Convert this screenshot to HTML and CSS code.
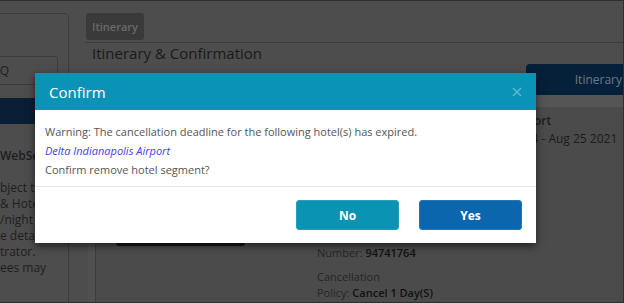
FILE: index.html
```html
<!DOCTYPE html>
<html lang="en">
<head>
    <meta charset="UTF-8">
    <meta name="viewport" content="width=device-width, initial-scale=1.0">
    <title>Itinerary &amp; Confirmation</title>
    <link rel="stylesheet" href="styles.css">
</head>
<body>
    <div class="page">
        <div class="sidebar">
            <div class="side-card">
                <div class="search">FAQ</div>
                <div class="nav-active"></div>
                <div class="side-title">WebSe</div>
                <div class="side-text">
                    <div>bject to</div>
                    <div>&amp; Hotel</div>
                    <div>/night</div>
                    <div>e details</div>
                    <div>trator.</div>
                    <div>ees may</div>
                </div>
            </div>
        </div>

        <div class="main">
            <div class="main-top">
                <div class="crumb">Itinerary</div>
            </div>
            <div class="rule"></div>
            <h1>Itinerary &amp; Confirmation</h1>

            <div class="tabs">
                <div class="tab">Itinerary</div>
            </div>
            <div class="band"></div>

            <div class="content">
                <div class="strip"></div>
                <div class="card">
                    <div class="media">
                        <div class="dark-btn"></div>
                    </div>
                    <div class="facts">
                        <div class="fact">Confirmation<br>Number: <b>94741764</b></div>
                        <div class="fact">Cancellation<br>Policy: <b>Cancel 1 Day(S)</b></div>
                    </div>
                    <div class="stay">
                        <div class="stay-name">Airport</div>
                        <div>Aug 24 - Aug 25 2021</div>
                    </div>
                </div>
            </div>
        </div>

        <div class="modal">
            <div class="modal-header">
                <span class="modal-title">Confirm</span>
                <svg class="close" width="10" height="10" viewBox="0 0 10 10">
                    <path d="M1 1 L9 9 M9 1 L1 9" stroke="#6cbcd0" stroke-width="1.2" fill="none"/>
                </svg>
            </div>
            <div class="modal-body">
                <p>Warning: The cancellation deadline for the following hotel(s) has expired.</p>
                <p class="hotel">Delta Indianapolis Airport</p>
                <p>Confirm remove hotel segment?</p>
            </div>
            <div class="modal-footer">
                <button class="btn btn-no">No</button>
                <button class="btn btn-yes">Yes</button>
            </div>
        </div>
    </div>
</body>
</html>
```

FILE: styles.css
```css
body {
    margin: 0;
    font-family: "Open Sans", sans-serif;
    overflow: hidden;
}
.page {
    position: relative;
    display: flex;
    width: 624px;
    height: 303px;
    box-sizing: border-box;
    background: #4d4d4d;
    border-top: 1px solid #2f2f2f;
    border-right: 1px solid #2f2f2f;
    border-bottom: 1px solid #2f2f2f;
    overflow: hidden;
    color: #1e1e1e;
}

/* sidebar */
.sidebar {
    width: 69px;
    flex: none;
}
.side-card {
    margin-top: 12px;
    margin-left: -30px;
    height: 400px;
    box-sizing: border-box;
    border: 1px solid #3c3c3c;
    border-top-right-radius: 5px;
    padding: 42px 10px 0 10px;
}
.search {
    height: 27px;
    border: 1px solid #3c3c3c;
    border-radius: 3px;
    padding-left: 4px;
    font-size: 12px;
    line-height: 27px;
    color: #1e1e1e;
}
.nav-active {
    margin: 13px -10px 0;
    height: 26px;
    background: #0a1f35;
}
.side-title {
    margin-top: 24px;
    padding-left: 19px;
    font-size: 12px;
    font-weight: 600;
    line-height: 16px;
}
.side-text {
    margin-top: 16px;
    padding-left: 19px;
    font-size: 12px;
    line-height: 16px;
    white-space: nowrap;
}

/* main */
.main {
    flex: 1;
    min-width: 0;
}
.main-top {
    padding: 12px 0 0 17px;
}
.crumb {
    display: inline-block;
    width: 58px;
    height: 27px;
    line-height: 27px;
    text-align: center;
    background: #3a3a3a;
    border-radius: 3px;
    color: #696969;
    font-size: 11px;
    font-weight: 600;
}
.rule {
    margin: 2px 0 0 16px;
    border-top: 1px solid #3c3c3c;
}
h1 {
    margin: 0 0 0 23px;
    font-size: 15px;
    font-weight: 400;
    line-height: 20px;
    color: #1a1a1a;
}
.tabs {
    display: flex;
    justify-content: flex-end;
    margin-top: 1px;
}
.tab {
    width: 98px;
    height: 31px;
    margin-right: -1px;
    background: #06203a;
    border-top-left-radius: 4px;
    color: #6b7a8a;
    font-size: 12px;
    line-height: 31px;
    text-align: right;
    padding-right: 2px;
    box-sizing: border-box;
}
.band {
    height: 12px;
    margin-left: 19px;
    background: #555555;
}
.content {
    display: flex;
    height: 200px;
    padding-left: 19px;
}
.strip {
    width: 7px;
    background: #515151;
}
.card {
    flex: 1;
    display: flex;
    border-left: 1px solid #3d3d3d;
    background: #4b4b4b;
    font-size: 11px;
    line-height: 16px;
}
.media {
    width: 221px;
    padding: 107px 0 0 20px;
    box-sizing: border-box;
}
.dark-btn {
    width: 129px;
    height: 32px;
    background: #141414;
    border-radius: 3px;
}
.facts {
    width: 183px;
    padding-top: 122px;
    color: #262626;
}
.fact {
    margin-bottom: 8px;
}
.fact b {
    font-weight: 600;
    color: #111;
}
.stay {
    padding-top: 5px;
    line-height: 18px;
    font-size: 12px;
    white-space: nowrap;
    color: #1c1c1c;
}
.stay-name {
    font-weight: 600;
    padding-left: 10px;
}

/* modal */
.modal {
    position: absolute;
    left: 35px;
    top: 72px;
    width: 501px;
    background: #fff;
    box-shadow: 0 3px 8px rgba(0, 0, 0, 0.55);
}
.modal-header {
    display: flex;
    align-items: center;
    justify-content: space-between;
    height: 37px;
    padding: 0 14px;
    background: #0a93b4;
}
.modal-title {
    color: #fff;
    font-size: 15px;
}
.modal-body {
    padding: 12px 10px 7px;
    border-bottom: 1px solid #e6e6e6;
}
.modal-body p {
    margin: 0;
    font-size: 11px;
    line-height: 19px;
    color: #555;
}
.modal-body .hotel {
    color: #4141ee;
    font-style: italic;
}
.modal-footer {
    display: flex;
    justify-content: flex-end;
    gap: 20px;
    padding: 13px 14px;
}
.btn {
    width: 103px;
    height: 30px;
    border-radius: 3px;
    color: #fff;
    font-family: "Open Sans", sans-serif;
    font-size: 12px;
    font-weight: 700;
    cursor: pointer;
}
.btn-no {
    background: #0b93b3;
    border: 1px solid #2a9fbb;
}
.btn-yes {
    background: #0b66ae;
    border: 1px solid #2677b8;
}
```
